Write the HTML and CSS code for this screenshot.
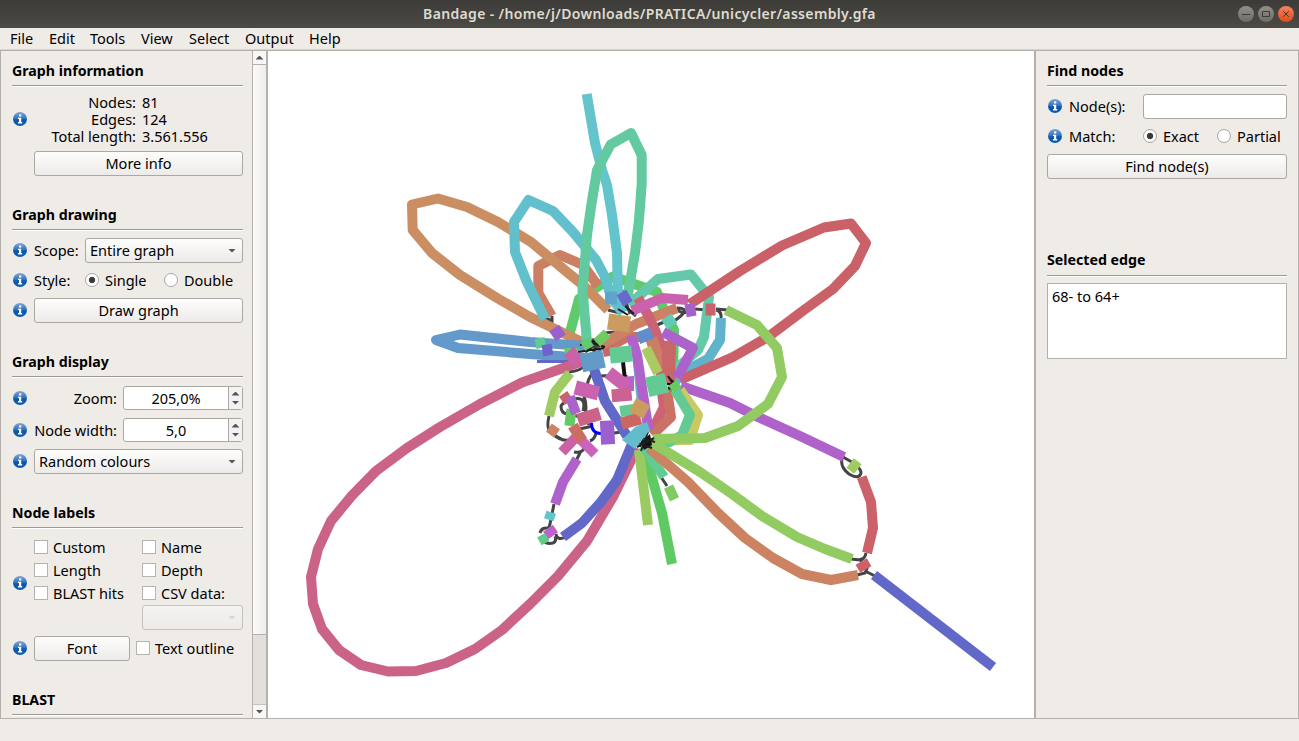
FILE: index.html
```html
<!DOCTYPE html>
<html lang="en">
<head>
<meta charset="utf-8">
<title>Bandage</title>
<link rel="stylesheet" href="styles.css">
</head>
<body>
<svg width="0" height="0" class="defs">
  <defs>
    <linearGradient id="blue" x1="0" y1="0" x2="0" y2="1"><stop offset="0" stop-color="#7fa8da"/><stop offset=".5" stop-color="#2f6fba"/><stop offset=".55" stop-color="#0d57ab"/><stop offset="1" stop-color="#0b5cb5"/></linearGradient>
    <symbol id="info" viewBox="0 0 14 14"><circle cx="7" cy="7" r="7" fill="url(#blue)"/><path d="M6 2.6h2.3v2H6zM5 5.8h3.2v4.3h1v1.3H5v-1.3h1V7H5z" fill="#fff"/></symbol>
  </defs>
</svg>
<div class="window">
  <header class="titlebar">
    <h1 class="title">Bandage - /home/j/Downloads/PRATICA/unicycler/assembly.gfa</h1>
    <div class="controls">
      <svg class="control" viewBox="0 0 16 16"><path d="M4 8.500h8"/></svg>
      <svg class="control" viewBox="0 0 16 16"><path d="M4.500 5.500h7v5h-7z"/></svg>
      <svg class="control close" viewBox="0 0 16 16"><path d="M5.200 5.200l5.600 5.600M10.800 5.200l-5.600 5.600"/></svg>
    </div>
  </header>
  <nav class="menubar"><span class="m-file">File</span><span class="m-edit">Edit</span><span class="m-tools">Tools</span><span class="m-view">View</span><span class="m-select">Select</span><span class="m-output">Output</span><span>Help</span></nav>
  <main class="main">
    <aside class="left">
      <div class="left-content">
        <section class="s-info">
          <h2>Graph information</h2>
          <div class="with-icon stats-row">
            <svg class="info"><use href="#info"/></svg>
            <div class="stats"><span>Nodes:</span><span>81</span><span>Edges:</span><span>124</span><span>Total length:</span><span>3.561.556</span></div>
          </div>
          <div class="button indent">More info</div>
        </section>
        <section class="s-drawing">
          <h2>Graph drawing</h2>
          <div class="with-icon scope"><svg class="info"><use href="#info"/></svg><span class="lab">Scope:</span><div class="button combo">Entire graph<i class="down"></i></div></div>
          <div class="with-icon style-row"><svg class="info"><use href="#info"/></svg><span class="lab">Style:</span><i class="radio on"></i><span class="single">Single</span><i class="radio"></i><span>Double</span></div>
          <div class="with-icon"><svg class="info"><use href="#info"/></svg><div class="button grow">Draw graph</div></div>
        </section>
        <section class="s-display">
          <h2>Graph display</h2>
          <div class="with-icon spin-row"><svg class="info"><use href="#info"/></svg><span class="right-lab">Zoom:</span><div class="spin"><span>205,0%</span><b><i class="up"></i><i class="down"></i></b></div></div>
          <div class="with-icon spin-row"><svg class="info"><use href="#info"/></svg><span class="right-lab">Node width:</span><div class="spin"><span>5,0</span><b><i class="up"></i><i class="down"></i></b></div></div>
          <div class="with-icon"><svg class="info"><use href="#info"/></svg><div class="button combo">Random colours<i class="down"></i></div></div>
        </section>
        <section class="s-labels">
          <h2>Node labels</h2>
          <div class="with-icon labels-row">
            <svg class="info"><use href="#info"/></svg>
            <div class="checks">
              <label><i class="check"></i>Custom</label><label><i class="check"></i>Name</label>
              <label><i class="check"></i>Length</label><label><i class="check"></i>Depth</label>
              <label><i class="check"></i>BLAST hits</label><label><i class="check"></i>CSV data:</label>
              <span></span><div class="button combo disabled"><i class="down"></i></div>
            </div>
          </div>
          <div class="with-icon"><svg class="info"><use href="#info"/></svg><div class="button font">Font</div><label><i class="check"></i>Text outline</label></div>
        </section>
        <section><h2>BLAST</h2></section>
      </div>
      <div class="scroll"><div class="arrow"><i class="up"></i></div><div class="thumb"></div><div class="track"></div><div class="arrow bottom"><i class="down"></i></div></div>
    </aside>
    <svg class="canvas" viewBox="268 51 766 667">
      <g class="edges">
        <path d="M545 318q10 2 7 12M552 316v10M608 310l12 3M622 290l8 24M612 296l24 20M630 300l10 12M602 334q6-2 14-2M580 345l30-3M570 350l30-4M580 341l22 10M575 343l35-6M585 352l20-14M687 300q8 2 5 8M677 308q9 0 7 4t-10 9M675 308q6 6 12 4M695 309l12 1M716 309l12 1M716 310q6 1 5 9M650 328l14-6"/>
        <path d="M569 372q12-1 16-7M592 374q-6 8-4 14M600 376q12-1 12 2M549 416q-3 13 2 16q5 5 12 8M551 433q13 12 26 4M572 399q-9 3-11 7q0 7 6 8M563 403q25-12 20 8M584 396q4 12 0 22M566 413q22 5 23 12M574 452q10 2 12-8M596 433q-1 6-6 8M575 430l18-4M614 433l8-1M581 451l-6 12M554 504l-4 20l-2 6M550 529q-8-3-10 4M541 537q3 8 12 6q4-2 2-7M556 534q1 7 10 3M626 375v25M661 477l6 9"/>
        <path d="M843 457l14 8M842 459q-2 8 7 15q10 6 12-1q0-4-5-7M851 559l9 1q5-1 6-7M860 558l4 9M857 575l8-2l3-7M865 571l10 5"/>
        <path d="M670 376l5 12M667 383l12 2M668 390l10-10M623 362l2 18" class="dark"/>
        <path d="M591.500 423q0 10 9 10.500h7" stroke="#00f"/>
      </g>
      <g class="nodes">
        <path stroke="#5fca6b" d="M569 336L579 299L613 276.500L657 292L664 310L674 330L673 374"/>
        <path stroke="#cb7f64" d="M551.700 316L538.300 293V266L560 255L583 265L598 286"/>
        <path stroke="#cb8e62" d="M608 310L583 285L567 272L531 242L498 222L467 207L438 198.500L412 204.500L412.700 230L432 253L460 275L497 298L530 317L557 330L584 343"/>
        <path stroke="#64c4cc" d="M586.700 94L595 143L602 170L607 185L612 215L617 253L618 297L622 312"/>
        <path stroke="#62c0cd" d="M545 319L526 280L515 252L514 222L528.500 200L553 211L573 232L596 260L605 277L611 297L623 313"/>
        <path stroke="#63c99f" d="M587 342L582.500 290L587 235L591 207L597 170L610.700 144.500L631 133L641.700 155V184L639 220L635 253L627 300"/>
        <path stroke="#64c9aa" d="M629 305L658 279L691 274.500L709 297L704 337L698 350L678 367L672 378"/>
        <path stroke="#61b3cb" d="M721 318L720 340L708 359L687 370L674 382"/>
        <path stroke="#cb6168" d="M690 304L740 271L782 245.500L824 227.500L851 223.500L866 243L855 266L833 289L804 310L768 337L733 357L680 380"/>
        <path stroke="#6499cb" d="M585 346L530 342L460 334.500L436 340L458 348L530 354L585 358"/>
        <path stroke="#6268c8" stroke-width="3" d="M537 361.500H571"/>
        <path stroke="#cb6287" d="M637 448L613 497L587 541L558 576L530 604L502 630L475 649L446 663L416 671L388 671.500L361 665L339 650L322 629L313 604L311 577L318 549L331 521L352 495.500L376 471L407 448L440 427L480 404L522 382.500L583 361"/>
        <path stroke="#cb7264" d="M603 350L627 337L640 337"/>
        <path stroke="#cb6668" d="M603 352L614 350M660 347L671 345L670 383"/>
        <path stroke="#cb8164" d="M602 345L636 324L677 308"/>
        <path stroke="#cb6275" d="M638 298L648 315L655 330L661 345V386L664 407L652 431"/>
        <path stroke="#cb7264" d="M667 390L671 417L652 435"/>
        <path stroke="#ca7f60" stroke-width="12" d="M651 338L662 370"/>
        <path stroke="#cb6668" stroke-width="8" d="M666 343V376"/>
        <path stroke="#cb62b0" d="M632 311L662 298L688 300"/>
        <path stroke="#a9cb62" d="M646 348L658 373"/>
        <path stroke="#ac62cb" d="M663 332L693 348L677 378"/>
        <path stroke="#b062cb" d="M681 386L730 403L758 417L800 436L844 457"/>
        <path stroke="#c9ca63" d="M680 390L698 415L690 440L671 440"/>
        <path stroke="#63ca94" d="M675 390L690 415L682 435L670 442L644 447"/>
        <path stroke="#92cb62" d="M726 310L757 325L777 348L782 377L768 404L738 426L705 438L653 439"/>
        <path stroke="#62b5cb" stroke-width="4" d="M633 342L639 405"/>
        <path stroke="#b062cb" d="M631 336L637 355L648.500 430"/>
        <path stroke="#6268c8" d="M594 369L605 401L627 436"/>
        <path stroke="#6268c8" d="M632 444L617 480L601 502L582 523L563 537"/>
        <path stroke="#5fca64" d="M644 450L662 513L672 564"/>
        <path stroke="#9acb62" d="M639 450L648 525"/>
        <path stroke="#63ca94" d="M643 446L664 477"/>
        <path stroke="#cb8362" d="M649 448L688 482L718 513L745 538L773 558L802 574L831 580L858 575"/>
        <path stroke="#92cb62" d="M651 442L700 472L732 494L762 516L797 537L825 549L852 559"/>
        <path stroke="#cb626a" d="M861.700 477L871 502L873 528L867 553"/>
        <path stroke="#6268c8" d="M874 575L993 667"/>
        <path stroke="#9ecb62" d="M570 373L555 392L549 416"/>
        <path stroke="#b062cb" d="M577 459L563 482L555 504"/>
        <path stroke="#cb62a4" d="M580 433L562 452"/>
        <path stroke="#cb62bb" d="M576 435L595 454"/>
      </g>
      <g>
        <path class="scribble" d="M618 309l10 6M625 306l9 8M578 352l26-4M584 347l18 7M580 345l25-7M590 342l15 5M668 376l8 13M670 379l9 8"/>
        <rect x="-6" y="-6" width="12" height="12" transform="translate(557.500 333)rotate(-35)" fill="#9c60cc"/>
        <rect x="-5" y="-5" width="10" height="10" transform="translate(540.500 343)rotate(-12)" fill="#62cb94"/>
        <rect x="-5" y="-6" width="10" height="11" transform="translate(547.500 350.500)rotate(-8)" fill="#6e62cb"/>
        <path d="M564 348h16l-14 10z" fill="#62cb70"/>
        <rect x="-6" y="-8" width="13" height="17" transform="translate(573.500 357.500)rotate(-40)" fill="#cb62a8"/>
        <rect x="-11.500" y="-9" width="23" height="18" transform="translate(592.700 361)rotate(-12)" fill="#629bc8"/>
        <rect x="-5" y="-5" width="10" height="10" transform="translate(587 344)rotate(-30)" fill="#62cb70"/>
        <rect x="-5" y="-7" width="10" height="14" transform="translate(602 338)rotate(48)" fill="#70cb62"/>
        <rect x="-11" y="-8" width="22" height="16" transform="translate(621 354.500)rotate(-5)" fill="#62cb94"/>
        <rect x="-11" y="-8" width="22" height="16" transform="translate(619 323)rotate(8)" fill="#cb9c60"/>
        <rect x="-6" y="-6.500" width="12" height="13" transform="translate(611 298)" fill="#62a3cb"/>
        <rect x="-5" y="-6" width="11" height="13" transform="translate(624 298)rotate(-30)" fill="#6668cb"/>
        <rect x="-6.500" y="-6" width="15" height="12" transform="translate(644 336)rotate(-22)" fill="#628dcb"/>
        <rect x="-5" y="-6.500" width="10" height="13" transform="translate(690.500 310)rotate(-10)" fill="#a562cb"/>
        <rect x="-5" y="-6" width="10" height="12" transform="translate(710.500 309.500)" fill="#cb626a"/>
        <rect x="-6" y="-5" width="12" height="11" transform="translate(669 321)rotate(-33)" fill="#62cbb5"/>
        <rect x="-10" y="-10" width="20" height="20" transform="translate(657 385)rotate(-14)" fill="#62cb94"/>
        <rect x="-5" y="-4.500" width="10" height="9" transform="translate(675 386.500)rotate(-38)" fill="#62cb62"/>
        <rect x="-12" y="-6.500" width="24" height="14" transform="translate(587 390)rotate(15)" fill="#cb62b0"/>
        <path d="M618 377l16-1v15h-8z" fill="#b662cb"/>
        <rect x="-13" y="-6" width="23" height="13" transform="translate(619 380)rotate(38)" fill="#cb62b0"/>
        <rect x="-10" y="-6.500" width="20" height="13" transform="translate(621.700 395)rotate(-5)" fill="#cb6291"/>
        <rect x="-7" y="-5" width="14" height="11" transform="translate(627 410)rotate(-8)" fill="#62cb94"/>
        <rect x="-10" y="-6" width="20" height="12" transform="translate(631 421)rotate(-15)" fill="#cb6664"/>
        <rect x="-8" y="-7" width="16" height="15" transform="translate(640 408)rotate(28)" fill="#cb9c60"/>
        <rect x="-5" y="-5" width="10" height="10" transform="translate(566 398)rotate(-35)" fill="#cb6464"/>
        <rect x="-5" y="-8" width="10" height="17" transform="translate(570.500 417)rotate(7)" fill="#62cb62"/>
        <rect x="-5" y="-9" width="10" height="18" transform="translate(573 405)rotate(-20)" fill="#ac62cb"/>
        <rect x="-11" y="-6.500" width="23" height="13" transform="translate(588.500 417)rotate(-17)" fill="#cb6287"/>
        <rect x="-5" y="-5" width="10" height="10" transform="translate(553 430.500)rotate(35)" fill="#cb8562"/>
        <rect x="-6" y="-9" width="11" height="18" transform="translate(578 433)rotate(-32)" fill="#cb6e62"/>
        <rect x="-7" y="-12" width="14" height="24" transform="translate(607.500 432.500)rotate(-3)" fill="#9c60cc"/>
        <path d="M641 442l9-8l2 11l-8 5z" fill="#111"/>
        <path class="scribble" d="M638 443l14 5M641 451l7-19M637 447l17-9M645 433l-5 14M644 439l11 3"/>
        <path d="M622 440L635 427L647 422L650 430L635 449Z" fill="#62bccb"/>
        <rect x="-5" y="-7" width="10" height="14" transform="translate(671.500 493)rotate(-25)" fill="#82cb62"/>
        <rect x="-5" y="-4" width="10" height="8" transform="translate(550 516)rotate(18)" fill="#62c6cb"/>
        <rect x="-6" y="-4.500" width="12" height="9" transform="translate(550.500 532)rotate(-35)" fill="#bd62cb"/>
        <rect x="-5" y="-4" width="9" height="9" transform="translate(543.500 538.500)rotate(-30)" fill="#62cb88"/>
        <rect x="-6" y="-5" width="12" height="10" transform="translate(854 466)rotate(-52)" fill="#9ecb62"/>
        <rect x="-6.500" y="-4.500" width="13" height="9" transform="translate(863.500 565.500)rotate(-30)" fill="#cb626a"/>
      </g>
    </svg>
    <aside class="right">
      <section class="s-find">
        <h2>Find nodes</h2>
        <div class="with-icon"><svg class="info"><use href="#info"/></svg><span class="find-lab">Node(s):</span><div class="input"></div></div>
        <div class="with-icon match"><svg class="info"><use href="#info"/></svg><span class="find-lab">Match:</span><i class="radio on"></i><span class="exact">Exact</span><i class="radio"></i><span>Partial</span></div>
        <div class="button">Find node(s)</div>
      </section>
      <section class="s-edge"><h2>Selected edge</h2><div class="textbox">68- to 64+</div></section>
    </aside>
  </main>
  <footer class="status"></footer>
</div>
</body>
</html>
```
FILE: styles.css
```css
* { box-sizing: border-box; }
body { margin: 0; font: 14.5px/20px "Noto Sans", "Open Sans", sans-serif; color: #000; background: #efebe7; overflow: hidden; }
.defs { position: absolute; }
.window { width: 1299px; height: 741px; display: flex; flex-direction: column; }
.titlebar { height: 28px; background: linear-gradient(#3c3b37, #4b4a44); display: grid; grid-template-columns: 61px 1fr 61px; align-items: center; }
.title { grid-column: 2; margin: 0; text-align: center; font-size: 14px; line-height: 28px; font-weight: 600; color: #dfdbd2; letter-spacing: .34px; }
.controls { display: flex; gap: 4px; }
.control { width: 16px; height: 16px; border-radius: 50%; background: linear-gradient(#918f88, #6e6c66); fill: none; stroke: #3c3b37; }
.close { background: linear-gradient(#f5825f, #e14b1d); }
.menubar { height: 22px; padding-left: 10px; display: flex; line-height: 20px; border-bottom: 1px solid #d7d3cf; }
.m-file { width: 39px; } .m-edit { width: 41px; } .m-tools { width: 51px; } .m-view { width: 48px; } .m-select { width: 56px; } .m-output { width: 64px; }
.main { height: 669px; display: flex; border-top: 1px solid #b4b0ac; border-bottom: 1px solid #b4b0ac; }
.left { width: 268px; display: flex; border-left: 1px solid #b4b0ac; border-right: 2px solid #b4b0ac; overflow: hidden; }
.left-content { width: 251px; padding: 10px 9px 0 11px; }
.canvas { width: 766px; height: 667px; background: #fff; }
.edges { fill: none; stroke: #444; stroke-width: 3; }
.dark { stroke: #111; stroke-width: 4; }
.nodes { fill: none; stroke-width: 10; stroke-linejoin: round; }
.scribble { fill: none; stroke: #1c1c1c; stroke-width: 2; }
.right { width: 265px; border-left: 2px solid #b4b0ac; border-right: 1px solid #b4b0ac; padding: 10px 11px 0 11px; }
h2 { margin: 0 0 8px; height: 26px; padding-bottom: 4px; border-bottom: 1px solid #fff; box-shadow: inset 0 -1px #9c9894; font-size: 14.2px; line-height: 20px; font-weight: 700; white-space: nowrap; }
.with-icon { display: flex; align-items: center; white-space: nowrap; }
.with-icon > span { padding-bottom: 2px; }
.info { width: 14px; height: 14px; margin: 0 7px 0 1px; flex: none; position: relative; top: -1px; }
.s-info { height: 144px; }
.stats-row { height: 50px; }
.stats { display: grid; grid-template-columns: 102px auto; column-gap: 6px; line-height: 17px; margin-top: -2px; }
.stats span:nth-child(odd) { text-align: right; }
.button { height: 25px; border: 1px solid #aba7a3; border-radius: 3px; background: linear-gradient(#fdfdfc, #edebe9); text-align: center; line-height: 22px; }
.indent { margin: 6px 0 0 22px; }
.grow { flex: 1; }
.combo { flex: 1; display: flex; justify-content: space-between; align-items: center; padding: 0 6px 0 4px; line-height: 23px; }
.up, .down { width: 8px; height: 4px; background: #555; clip-path: polygon(50% 0, 100% 100%, 0 100%); }
.down { clip-path: polygon(0 0, 100% 0, 50% 100%); }
.disabled { border-color: #c5c1bd; background: linear-gradient(#f5f3f1, #edeae7); } .disabled .down { background: #d8d5d2; margin-left: auto; }
.s-drawing { height: 147px; }
.s-drawing h2 { margin-bottom: 7px; }
.scope .lab { width: 51px; }
.style-row { height: 35px; }
.style-row .lab { width: 51px; }
.radio { width: 14px; height: 14px; border-radius: 50%; border: 1px solid #aaa6a2; background: #fff; margin: -1px 6px 0 0; flex: none; }
.on { background: radial-gradient(circle, #3c3c3c 0 2.8px, #fff 3.6px); }
.single { width: 59px; }
.s-display { height: 151px; }
.spin-row { height: 32px; align-items: flex-start; line-height: 25px; }
.spin-row .info { top: 5px; }
.right-lab { width: 83px; margin-right: 6px; text-align: right; }
.spin { width: 120px; height: 24px; display: flex; border: 1px solid #aba7a3; border-radius: 3px; background: #fff; line-height: 23px; text-align: center; }
.spin span { flex: 1; }
.spin b { width: 14px; border-left: 1px solid #aba7a3; background: #f5f3f1; display: flex; flex-direction: column; align-items: center; justify-content: space-around; padding: 2px 0; }
.s-display .with-icon:last-child { margin-top: -1px; }
.s-labels { height: 187px; }
.s-labels h2 { margin-bottom: 7px; }
.labels-row { height: 94px; margin-bottom: 6px; }
.labels-row .info { top: 0; }
.checks { width: 209px; display: grid; grid-template-columns: 108px 101px; grid-template-rows: 23px 23px 23px 25px; }
label { display: flex; align-items: center; line-height: 23px; white-space: nowrap; }
.check { width: 14px; height: 14px; border: 1px solid #b7b3af; background: #fff; margin: -1px 5px 0 0; flex: none; }
.font { width: 96px; margin-right: 6px; }
.scroll { width: 14px; border-left: 1px solid #b4b0ac; display: flex; flex-direction: column; background: #e3e0dc; }
.arrow { height: 14px; background: #f8f7f5; border-bottom: 1px solid #b4b0ac; display: flex; align-items: center; justify-content: center; }
.thumb { height: 570px; background: linear-gradient(90deg, #fbfaf9, #efedea); border-bottom: 1px solid #b4b0ac; }
.track { flex: 1; }
.arrow.bottom { border-bottom: 0; border-top: 1px solid #c4c0bc; }
.s-find { height: 189px; }
.right h2 { margin-bottom: 7px; }
.right .s-edge h2 { height: 27px; padding-bottom: 5px; margin-bottom: 6px; }
.find-lab { width: 74px; }
.input { height: 25px; width: 144px; border: 1px solid #aba7a3; border-radius: 3px; background: #fff; }
.match { height: 35px; }
.exact { width: 54px; }
.right .info { margin-right: 7px; }
.textbox { height: 76px; border: 1px solid #b4b0ac; background: #fff; padding: 3px 4px; line-height: 19px; }
```
